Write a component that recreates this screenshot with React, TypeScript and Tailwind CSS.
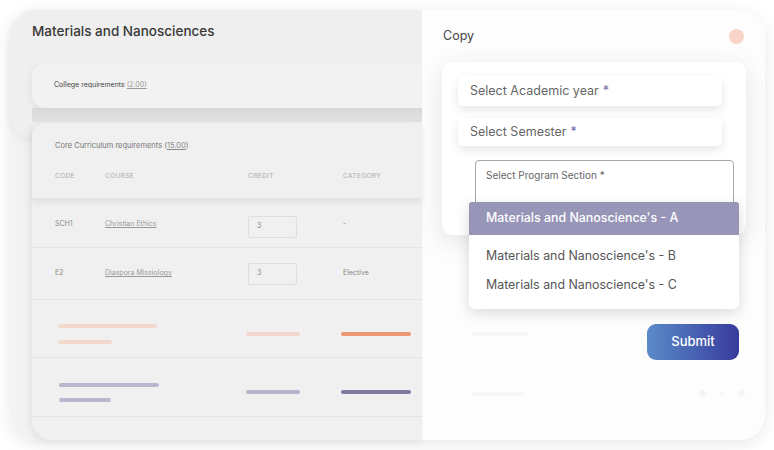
const font = { fontFamily: "Inter, 'Open Sans', sans-serif" };

function Bar({ w, color }: { w: string; color: string }) {
  return <div className={`h-[4px] rounded-full ${w} ${color}`} />;
}

function CreditBox({ value }: { value: string }) {
  return (
    <div className="flex h-[22px] w-[49px] items-center rounded-[2px] border border-[#dedede] pl-[8px] text-[7px] text-[#888]">
      {value}
    </div>
  );
}

function CurriculumTable() {
  return (
    <div className="relative z-10 -mt-[15px] ml-[22px] h-[317px] w-[390px] rounded-tl-[14px] rounded-bl-[20px] bg-[#f0f0f0] shadow-[-3px_2px_8px_rgba(0,0,0,0.07)]">
      <div className="h-[75px] pl-[23px] pt-[18px] shadow-[0_5px_6px_rgba(0,0,0,0.06)]">
        <div className="text-[7.5px] leading-[10px] text-[#777]">
          Core Curriculum requirements (<span className="text-[#888] underline">15.00</span>)
        </div>
        <div className="mt-[21px] grid grid-cols-[50px_143px_95px_1fr] text-[6.5px] uppercase tracking-[0.06em] text-[#aaa]">
          <span>Code</span>
          <span>Course</span>
          <span>Credit</span>
          <span>Category</span>
        </div>
      </div>
      <div className="grid h-[50px] grid-cols-[50px_143px_95px_1fr] items-center border-b border-[#e4e4e4] pl-[23px] pt-[3px] text-[7px] text-[#888]">
        <span>SCH1</span>
        <span className="text-[#999] underline">Christian Ethics</span>
        <div className="mt-[5px]">
          <CreditBox value="3" />
        </div>
        <span>-</span>
      </div>
      <div className="grid h-[52px] grid-cols-[50px_143px_95px_1fr] items-center border-b border-[#e4e4e4] pl-[23px] text-[7px] text-[#888]">
        <span>E2</span>
        <span className="text-[#999] underline">Diaspora Missiology</span>
        <CreditBox value="3" />
        <span>Elective</span>
      </div>
      <div className="grid h-[58px] grid-cols-[193px_95px_1fr] items-center border-b border-[#e4e4e4] pl-[26px] pt-[10px]">
        <div className="flex flex-col gap-[12px]">
          <Bar w="w-[99px]" color="bg-[#f3d8cd]" />
          <Bar w="w-[54px]" color="bg-[#f3d8cd]" />
        </div>
        <div className="-ml-[5px]">
          <Bar w="w-[54px]" color="bg-[#f1d7cd]" />
        </div>
        <div className="-ml-[5px]">
          <Bar w="w-[70px]" color="bg-[#eb9773]" />
        </div>
      </div>
      <div className="grid h-[59px] grid-cols-[193px_95px_1fr] items-center border-b border-[#e2e2e2] pl-[26px] pt-[10px]">
        <div className="flex flex-col gap-[11px] pl-[1px]">
          <Bar w="w-[100px]" color="bg-[#b9b7cb]" />
          <Bar w="w-[52px]" color="bg-[#b9b7cb]" />
        </div>
        <div className="-ml-[5px]">
          <Bar w="w-[54px]" color="bg-[#b6b4c9]" />
        </div>
        <div className="-ml-[5px]">
          <Bar w="w-[70px]" color="bg-[#7f7ca1]" />
        </div>
      </div>
    </div>
  );
}

function LeftSide() {
  return (
    <div className="h-full w-[412px] rounded-l-[26px] bg-[#f3f3f3]">
      <div className="h-[128px] rounded-tl-[26px] rounded-bl-[22px] bg-[#efefef] pl-[22px] pt-[13px] shadow-[0_3px_8px_rgba(0,0,0,0.06)]">
        <h1 className="text-[13.5px] font-medium leading-[16px] text-[#383838]">
          Materials and Nanosciences
        </h1>
        <div className="mt-[24px] flex h-[45px] items-center rounded-l-[14px] bg-[#f2f2f2] pl-[22px] shadow-[-2px_2px_6px_rgba(0,0,0,0.05)]">
          <span className="text-[7px] text-[#444]">
            College requirements <span className="text-[#999] underline">(2.00)</span>
          </span>
        </div>
        <div className="h-[14px] bg-gradient-to-b from-[#d9d9d9] to-[#e3e3e3]" />
      </div>
      <CurriculumTable />
    </div>
  );
}

function Field({ label, h }: { label: string; h: string }) {
  return (
    <div
      className={`flex ${h} w-[264px] items-center rounded-[5px] bg-white pl-[12px] text-[12.5px] text-[#666] shadow-[0_4px_10px_rgba(0,0,0,0.10)]`}
    >
      {label} <span className="ml-[4px] text-[#6b68a0]">*</span>
    </div>
  );
}

function CopyPanel() {
  return (
    <div className="relative h-full w-[343px] rounded-r-[26px] bg-[#fdfdfd]">
      <div className="flex items-start justify-between pl-[21px] pr-[21px] pt-[18px]">
        <span className="text-[12.5px] leading-[16px] text-[#444]">Copy</span>
        <div className="mt-[1px] h-[15px] w-[15px] rounded-full bg-[#f9d3c7]" />
      </div>
      <div className="ml-[20px] mt-[18px] h-[173px] w-[304px] rounded-[10px] bg-white pl-[16px] pt-[14px] shadow-[0_6px_26px_rgba(0,0,0,0.10)]">
        <Field label="Select Academic year" h="h-[30px]" />
        <div className="mt-[12px]">
          <Field label="Select Semester" h="h-[28px]" />
        </div>
        <div className="ml-[17px] mt-[14px] h-[52px] w-[259px] rounded-[4px] border border-[#a8a8a8] bg-white pl-[10px] pt-[8px] text-[10px] leading-[13px] text-[#666]">
          Select Program Section *
        </div>
      </div>

      <div className="absolute left-[47px] top-[192px] z-20 h-[107px] w-[270px] overflow-hidden rounded-b-[6px] bg-white text-[12.4px] text-[#555] shadow-[0_4px_14px_rgba(0,0,0,0.14)]">
        <div className="flex h-[33px] items-center rounded-t-[3px] bg-[#9795b8] pl-[17px] font-medium text-white">
          Materials and Nanoscience's - A
        </div>
        <div className="pt-[7px]">
          <div className="flex h-[29px] items-center pl-[17px]">Materials and Nanoscience's - B</div>
          <div className="flex h-[29px] items-center pl-[17px]">Materials and Nanoscience's - C</div>
        </div>
      </div>

      <div className="mt-[89px] flex items-start justify-between pl-[50px] pr-[26px]">
        <div className="mt-[8px] h-[4px] w-[56px] rounded-full bg-[#f7f7f7]" />
        <button className="flex h-[36px] w-[92px] items-center justify-center rounded-[9px] bg-gradient-to-r from-[#5b8bc9] to-[#383a9c] text-[13px] font-medium text-white">
          Submit
        </button>
      </div>
      <div className="mt-[30px] flex items-center justify-between pl-[50px] pr-[20px]">
        <div className="h-[4px] w-[52px] rounded-full bg-[#f6f6f6]" />
        <div className="flex items-center gap-[14px]">
          <div className="h-[7px] w-[7px] rounded-full bg-[#f5f5f5]" />
          <div className="h-[5px] w-[4px] rounded-full bg-[#f5f5f5]" />
          <div className="h-[7px] w-[7px] rounded-full bg-[#f5f5f5]" />
        </div>
      </div>
    </div>
  );
}

export default function App() {
  return (
    <div className="h-[450px] w-[774px] bg-white pl-[10px] pt-[10px]" style={font}>
      <div className="flex h-[430px] w-[755px] rounded-[26px] shadow-[0_4px_18px_rgba(0,0,0,0.09)]">
        <LeftSide />
        <CopyPanel />
      </div>
    </div>
  );
}
